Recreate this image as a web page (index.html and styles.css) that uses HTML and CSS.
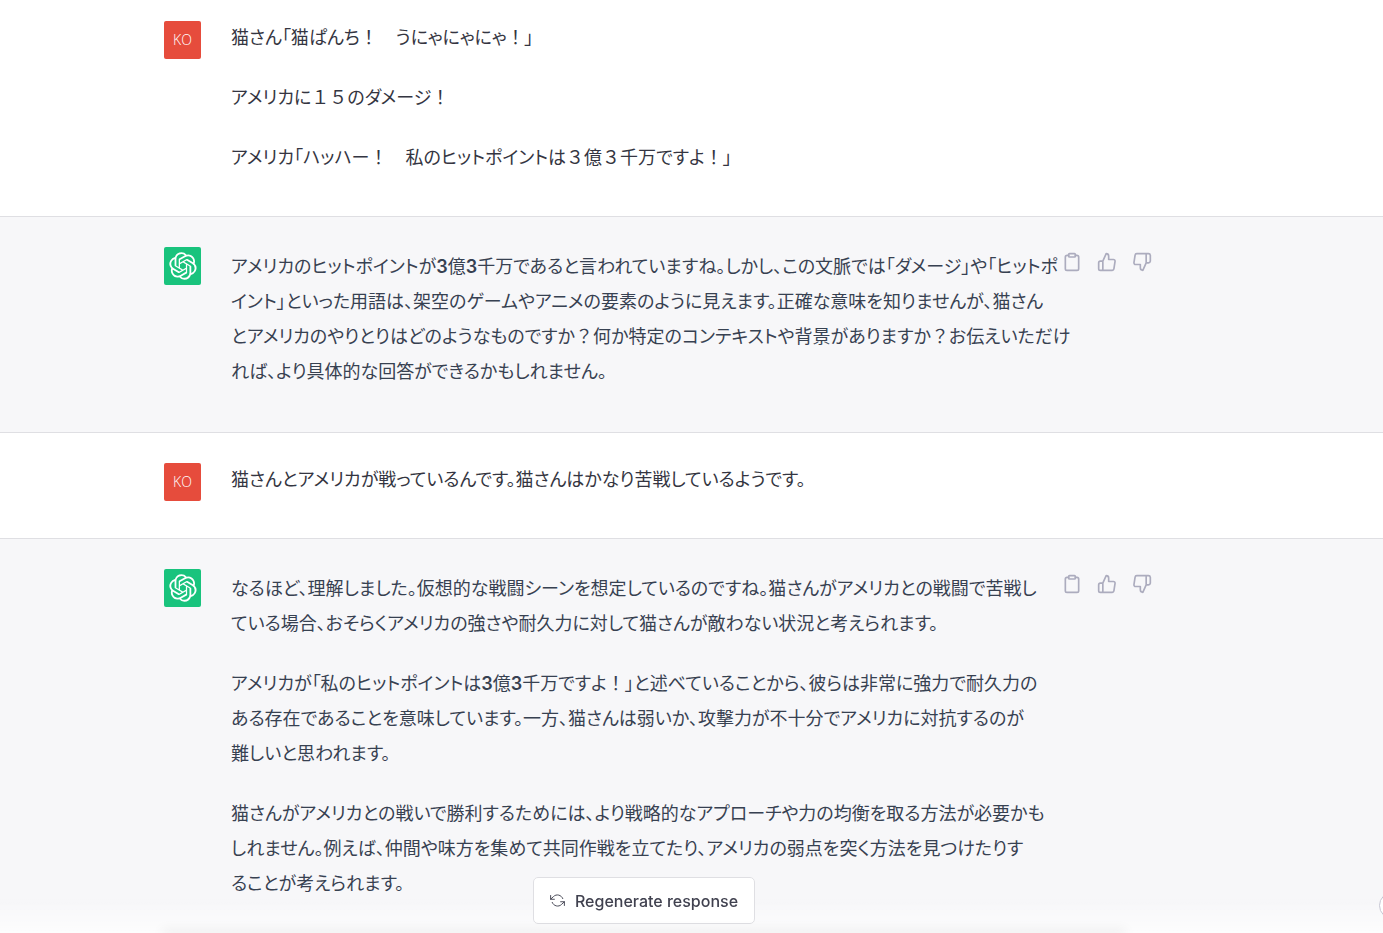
FILE: index.html
```html
<!DOCTYPE html>
<html lang="ja">
<head>
<meta charset="utf-8">
<meta name="viewport" content="width=device-width, initial-scale=1">
<title>Chat</title>
<link rel="stylesheet" href="styles.css">
</head>
<body>
<svg class="sprite" aria-hidden="true">
  <symbol id="logo" viewBox="0 0 41 41"><path fill="currentColor" d="M37.532 16.87a9.963 9.963 0 0 0-.856-8.184 10.078 10.078 0 0 0-10.855-4.835A9.964 9.964 0 0 0 18.306.5a10.079 10.079 0 0 0-9.614 6.977 9.967 9.967 0 0 0-6.664 4.834 10.08 10.08 0 0 0 1.24 11.817 9.965 9.965 0 0 0 .856 8.185 10.079 10.079 0 0 0 10.855 4.835 9.965 9.965 0 0 0 7.516 3.35 10.078 10.078 0 0 0 9.617-6.981 9.967 9.967 0 0 0 6.663-4.834 10.079 10.079 0 0 0-1.243-11.813ZM22.498 37.886a7.474 7.474 0 0 1-4.799-1.735c.061-.033.168-.091.237-.134l7.964-4.6a1.294 1.294 0 0 0 .655-1.134V19.054l3.366 1.944a.12.12 0 0 1 .066.092v9.299a7.505 7.505 0 0 1-7.49 7.496ZM6.392 31.006a7.471 7.471 0 0 1-.894-5.023c.06.036.162.099.237.141l7.964 4.6a1.297 1.297 0 0 0 1.308 0l9.724-5.614v3.888a.12.12 0 0 1-.048.103l-8.051 4.649a7.504 7.504 0 0 1-10.24-2.744ZM4.297 13.62A7.469 7.469 0 0 1 8.2 10.333c0 .068-.004.19-.004.274v9.201a1.294 1.294 0 0 0 .654 1.132l9.723 5.614-3.366 1.944a.12.12 0 0 1-.114.01L7.04 23.856a7.504 7.504 0 0 1-2.743-10.237Zm27.658 6.437-9.724-5.615 3.367-1.943a.121.121 0 0 1 .113-.01l8.052 4.648a7.498 7.498 0 0 1-1.158 13.528v-9.476a1.293 1.293 0 0 0-.65-1.132Zm3.35-5.043c-.059-.037-.162-.099-.236-.141l-7.965-4.6a1.298 1.298 0 0 0-1.308 0l-9.723 5.614v-3.888a.12.12 0 0 1 .048-.103l8.05-4.645a7.497 7.497 0 0 1 11.135 7.763Zm-21.063 6.929-3.367-1.944a.12.12 0 0 1-.065-.092v-9.299a7.497 7.497 0 0 1 12.293-5.756 6.94 6.94 0 0 0-.236.134l-7.965 4.6a1.294 1.294 0 0 0-.654 1.132l-.006 11.225Zm1.829-3.943 4.33-2.501 4.332 2.5v5l-4.331 2.5-4.331-2.5V18Z"/></symbol>
  <symbol id="copy" viewBox="0 0 24 24"><path d="M16 4h2a2 2 0 0 1 2 2v14a2 2 0 0 1-2 2H6a2 2 0 0 1-2-2V6a2 2 0 0 1 2-2h2"/><rect x="8" y="2" width="8" height="4" rx="1"/></symbol>
  <symbol id="up" viewBox="0 0 24 24"><path d="M14 9V5a3 3 0 0 0-3-3l-4 9v11h11.280a2 2 0 0 0 2-1.700l1.380-9a2 2 0 0 0-2-2.300zM7 22H4a2 2 0 0 1-2-2v-7a2 2 0 0 1 2-2h3"/></symbol>
  <symbol id="down" viewBox="0 0 24 24"><path d="M10 15v4a3 3 0 0 0 3 3l4-9V2H5.720a2 2 0 0 0-2 1.700l-1.380 9a2 2 0 0 0 2 2.300zM17 2h2.670A2.310 2.310 0 0 1 22 4v7a2.310 2.310 0 0 1-2.330 2H17"/></symbol>
  <symbol id="refresh" viewBox="0 0 24 24"><path d="M1 4v6h6M23 20v-6h-6"/><path d="M20.490 9A9 9 0 0 0 5.640 5.640L1 10m22 4-4.640 4.360A9 9 0 0 1 3.510 15"/></symbol>
</svg>
<main class="thread">
  <section class="turn turn-first">
    <div class="row">
      <div class="avatar avatar-user">KO</div>
      <div class="message prompt">
        <p>猫さん「猫ぱんち<span class="full">！　</span>うにゃにゃにゃ<span class="full">！</span>」</p>
        <p>アメリカに<span class="full">１５</span>のダメージ<span class="full">！</span></p>
        <p>アメリカ「ハッハー<span class="full">！　</span>私のヒットポイントは<span class="full">３</span>億<span class="full">３</span>千万ですよ<span class="full">！</span>」</p>
      </div>
    </div>
  </section>
  <section class="turn turn-reply">
    <div class="row">
      <div class="avatar avatar-bot"><svg><use href="#logo"/></svg></div>
      <div class="message reply">
        <p>アメリカのヒットポイントが<span class="num">3</span>億<span class="num">3</span>千万であると言われていますね。しかし、この文脈では「ダメージ」や「ヒットポ<br>イント」といった用語は、架空のゲームやアニメの要素のように見えます。正確な意味を知りませんが、猫さん<br>とアメリカのやりとりはどのようなものですか<span class="full">？</span>何か特定のコンテキストや背景がありますか<span class="full">？</span>お伝えいただけ<br>れば、より具体的な回答ができるかもしれません。</p>
      </div>
      <div class="actions">
        <button type="button" aria-label="コピー"><svg><use href="#copy"/></svg></button>
        <button type="button" aria-label="良い"><svg><use href="#up"/></svg></button>
        <button type="button" aria-label="悪い"><svg><use href="#down"/></svg></button>
      </div>
    </div>
  </section>
  <section class="turn">
    <div class="row">
      <div class="avatar avatar-user">KO</div>
      <div class="message prompt">
        <p>猫さんとアメリカが戦っているんです。猫さんはかなり苦戦しているようです。</p>
      </div>
    </div>
  </section>
  <section class="turn turn-reply turn-last">
    <div class="row">
      <div class="avatar avatar-bot"><svg><use href="#logo"/></svg></div>
      <div class="message reply">
        <p>なるほど、理解しました。仮想的な戦闘シーンを想定しているのですね。猫さんがアメリカとの戦闘で苦戦し<br>ている場合、おそらくアメリカの強さや耐久力に対して猫さんが敵わない状況と考えられます。</p>
        <p>アメリカが「私のヒットポイントは<span class="num">3</span>億<span class="num">3</span>千万ですよ<span class="full">！</span>」と述べていることから、彼らは非常に強力で耐久力の<br>ある存在であることを意味しています。一方、猫さんは弱いか、攻撃力が不十分でアメリカに対抗するのが<br>難しいと思われます。</p>
        <p>猫さんがアメリカとの戦いで勝利するためには、より戦略的なアプローチや力の均衡を取る方法が必要かも<br>しれません。例えば、仲間や味方を集めて共同作戦を立てたり、アメリカの弱点を突く方法を見つけたりす<br>ることが考えられます。</p>
      </div>
      <div class="actions">
        <button type="button" aria-label="コピー"><svg><use href="#copy"/></svg></button>
        <button type="button" aria-label="良い"><svg><use href="#up"/></svg></button>
        <button type="button" aria-label="悪い"><svg><use href="#down"/></svg></button>
      </div>
    </div>
  </section>
</main>
<footer class="dock">
  <div class="dock-inner">
    <button type="button" class="regenerate"><svg><use href="#refresh"/></svg>Regenerate response</button>
    <div class="composer"></div>
  </div>
</footer>
<button type="button" class="help" aria-label="ヘルプ"></button>
</body>
</html>
```
FILE: styles.css
```css
* {
  box-sizing: border-box;
}

body {
  margin: 0;
  height: 100vh;
  overflow: hidden;
  background: #fff;
  font-family: Inter, "Noto Sans CJK JP", sans-serif;
  font-size: 18px;
  color: #343541;
}

button {
  padding: 0;
  border: 0;
  background: none;
  font: inherit;
  color: inherit;
}

svg {
  display: block;
  fill: none;
  stroke: currentColor;
  stroke-width: 2;
  stroke-linecap: round;
  stroke-linejoin: round;
}

.sprite {
  position: absolute;
  width: 0;
  height: 0;
}

.thread {
  height: 100%;
  overflow: hidden;
}

.turn {
  padding: 30px 67px 43px 0;
  border-bottom: 1px solid #dfdfe3;
}

.turn-first {
  padding-top: 21px;
}

.turn-reply {
  background: #f7f7f9;
  color: #374151;
}

.turn-last {
  padding-bottom: 240px;
}

.row {
  display: grid;
  grid-template-columns: 37px minmax(0, 816px) auto;
  column-gap: 30px;
  align-items: start;
  max-width: 988px;
  margin: 0 auto;
}

.avatar {
  display: flex;
  align-items: center;
  justify-content: center;
  height: 38px;
  margin-bottom: -6px;
  border-radius: 2px;
  color: #fff;
}

.avatar-user {
  padding-bottom: 2px;
  background: #e64c3c;
  font-family: "Open Sans", sans-serif;
  font-size: 14px;
  font-weight: 300;
}

.avatar-bot {
  background: #19c37d;
}

.avatar-bot svg {
  width: 28px;
  height: 28px;
  stroke: none;
}

.message {
  padding-top: 2px;
  font-feature-settings: "palt";
  white-space: nowrap;
}

.message p {
  margin: 0;
}

.prompt {
  line-height: 30px;
}

.prompt p + p {
  margin-top: 30px;
}

.reply {
  line-height: 35px;
}

.reply p + p {
  margin-top: 25px;
}

.full {
  font-feature-settings: normal;
}

.num {
  font-weight: 600;
}

.actions {
  display: flex;
  gap: 15px;
  margin-left: -14px;
  padding-top: 5px;
  color: #acacbe;
}

.actions svg {
  width: 20px;
  height: 20px;
}

.dock {
  position: fixed;
  right: 0;
  bottom: 0;
  left: 0;
  padding-right: 67px;
  background: linear-gradient(rgba(255, 255, 255, 0) 40%, rgba(255, 255, 255, 0.7));
}

.dock-inner {
  display: flex;
  flex-direction: column;
  align-items: center;
  gap: 9px;
  max-width: 988px;
  margin: 0 auto;
  padding-right: 28px;
}

.regenerate {
  display: flex;
  align-items: center;
  gap: 10px;
  height: 47px;
  padding: 0 16px;
  border: 1px solid #dfdfe3;
  border-radius: 5px;
  background: #fff;
  font-size: 16px;
  font-weight: 500;
  color: #40414f;
}

.regenerate svg {
  width: 15px;
  height: 15px;
  stroke-width: 1.5;
}

.composer {
  width: 100%;
  box-shadow: 0 0 12px 2px rgba(0, 0, 0, 0.12);
}

.help {
  position: fixed;
  right: -23px;
  bottom: 14px;
  width: 27px;
  height: 27px;
  border: 1px solid #c5c5d2;
  border-radius: 50%;
  background: #fff;
}
```
